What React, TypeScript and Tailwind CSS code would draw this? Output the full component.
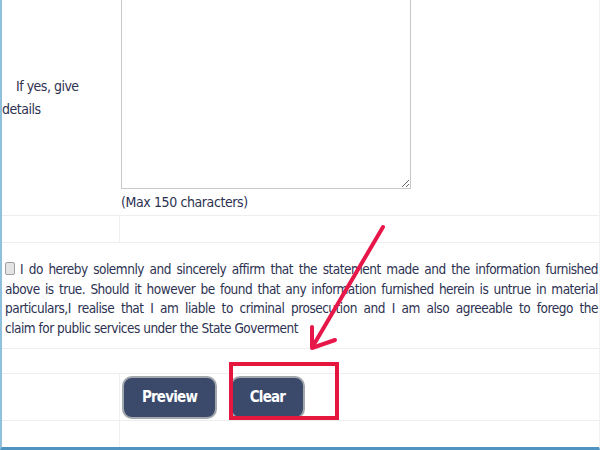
import React from "react";

const font = {
  fontFamily: '"DejaVu Sans Condensed", "DejaVu Sans", sans-serif',
};

const declaration = [
  "I do hereby solemnly and sincerely affirm that the statement made and the information furnished",
  "above is true. Should it however be found that any information furnished herein is untrue in material",
  "particulars,I realise that I am liable to criminal prosecution and I am also agreeable to forego the",
  "claim for public services under the State Goverment",
];

function Annotation() {
  return (
    <>
      <div className="absolute left-[227px] top-[362px] w-[110px] h-[58px] border-4 border-[#e5173f] pointer-events-none" />
      <svg
        className="absolute inset-0 pointer-events-none"
        width="600"
        height="450"
        viewBox="0 0 600 450"
      >
        <g stroke="#e8174a" strokeWidth="4" strokeLinecap="round" fill="none">
          <line x1="381" y1="227" x2="311" y2="346" />
          <polyline points="310,327 310,348 333,340" strokeLinejoin="round" />
        </g>
      </svg>
    </>
  );
}

export default function App() {
  return (
    <div
      className="relative w-[600px] h-[450px] overflow-hidden bg-white text-[#2d3252] border-l-2 border-l-[#8ec0de] border-b-[3px] border-b-[#4f93c0] border-r border-r-[#f2f2f2]"
      style={font}
    >
      {/* details row */}
      <div className="grid grid-cols-[118px_1fr] -mt-[22px] border-b border-[#eeeeee]">
        <div className="flex items-center text-[14px] tracking-[-0.5px] leading-[23px] pt-[2px]">
          <span>&nbsp;&nbsp;&nbsp;&nbsp;If yes, give details</span>
        </div>
        <div className="flex flex-col items-start pl-[1px]">
          <textarea className="w-[290px] h-[211px] border border-[#c8c8c8] bg-white resize-y block" />
          <div className="text-[14px] tracking-[-0.4px] leading-[26px] h-[26px] whitespace-nowrap">
            (Max 150 characters)
          </div>
        </div>
      </div>

      {/* spacer row */}
      <div className="grid grid-cols-[118px_1fr] h-[27px] border-b border-[#eeeeee]">
        <div className="border-r border-[#f0f0f0]" />
        <div />
      </div>

      {/* declaration */}
      <div className="h-[106px] overflow-hidden border-b border-[#eeeeee] pt-[17px] pl-[3px] pr-[1px] text-[13.5px] tracking-[-0.5px] leading-[19.5px]">
        {declaration.map((line, i) => (
          <div
            key={i}
            className={
              "whitespace-nowrap " +
              (i < declaration.length - 1 ? "text-justify [text-align-last:justify]" : "")
            }
          >
            {i === 0 && (
              <input
                type="checkbox"
                className="appearance-none w-[10px] h-[13px] mr-[5px] align-[-1px] border border-[#a0a0a0] rounded-[2px] bg-[#e4e4e4]"
              />
            )}
            {line}
          </div>
        ))}
      </div>

      {/* empty row */}
      <div className="h-[25px] border-b border-[#eeeeee]" />

      {/* buttons row */}
      <div className="grid grid-cols-[118px_1fr] h-[47px] border-b border-[#eeeeee]">
        <div className="border-r border-[#f0f0f0]" />
        <div className="flex items-center gap-[13px] pl-[2px]">
          <button className="w-[95px] h-[43px] rounded-[10px] bg-[#3b4a6b] border-2 border-[#a3a7ae] text-white font-bold text-[15px] tracking-[-0.8px]">
            Preview
          </button>
          <button className="w-[75px] h-[43px] rounded-[10px] bg-[#3b4a6b] border-2 border-[#a3a7ae] text-white font-bold text-[15px] tracking-[-0.8px]">
            Clear
          </button>
        </div>
      </div>

      {/* last row */}
      <div className="grid grid-cols-[118px_1fr] h-[40px]">
        <div className="border-r border-[#f0f0f0]" />
        <div />
      </div>

      <Annotation />
    </div>
  );
}
